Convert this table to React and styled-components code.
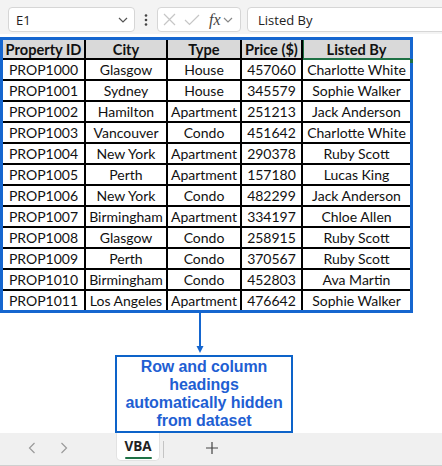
import styled, { createGlobalStyle } from "styled-components";

const GlobalStyle = createGlobalStyle`
  html, body {
    margin: 0;
    padding: 0;
    background: #ffffff;
    overflow: hidden;
  }
`;

const rows = [
  ["PROP1000", "Glasgow", "House", "457060", "Charlotte White"],
  ["PROP1001", "Sydney", "House", "345579", "Sophie Walker"],
  ["PROP1002", "Hamilton", "Apartment", "251213", "Jack Anderson"],
  ["PROP1003", "Vancouver", "Condo", "451642", "Charlotte White"],
  ["PROP1004", "New York", "Apartment", "290378", "Ruby Scott"],
  ["PROP1005", "Perth", "Apartment", "157180", "Lucas King"],
  ["PROP1006", "New York", "Condo", "482299", "Jack Anderson"],
  ["PROP1007", "Birmingham", "Apartment", "334197", "Chloe Allen"],
  ["PROP1008", "Glasgow", "Condo", "258915", "Ruby Scott"],
  ["PROP1009", "Perth", "Condo", "370567", "Ruby Scott"],
  ["PROP1010", "Birmingham", "Condo", "452803", "Ava Martin"],
  ["PROP1011", "Los Angeles", "Apartment", "476642", "Sophie Walker"],
];

const headers = ["Property ID", "City", "Type", "Price ($)", "Listed By"];

const Page = styled.div`
  width: 442px;
  height: 466px;
  display: flex;
  flex-direction: column;
  background: #fff;
  font-family: "Open Sans", "Noto Sans", sans-serif;
`;

const TopBar = styled.div`
  height: 34px;
  box-sizing: border-box;
  padding: 7px 0 0 8px;
  background: #f3f3f3;
  display: flex;
  align-items: flex-start;
  overflow: hidden;
`;

const Box = styled.div`
  height: 25px;
  box-sizing: border-box;
  background: #fff;
  border: 1px solid #d6d6d6;
  border-radius: 4px;
  display: flex;
  align-items: center;
`;

const NameBox = styled(Box)`
  width: 127px;
  padding: 0 6px 0 7px;
  justify-content: space-between;
  font-size: 13px;
  color: #222;
`;

const Dots = styled.div`
  width: 22px;
  height: 25px;
  display: flex;
  align-items: center;
  justify-content: center;
`;

const FxGroup = styled(Box)`
  width: 84px;
  padding: 0 4px 0 5px;
  gap: 8px;
`;

const FxLabel = styled.span`
  font-family: "Liberation Serif", serif;
  font-style: italic;
  font-size: 16px;
  color: #444;
  margin-left: 1px;
  margin-right: -6px;
`;

const FormulaBox = styled(Box)`
  flex: 1;
  margin-left: 6px;
  margin-right: -10px;
  padding-left: 10px;
  font-size: 13px;
  color: #222;
`;

const Sheet = styled.div`
  padding-top: 3px;
  display: flex;
  flex-direction: column;
`;

const TableFrame = styled.div`
  width: fit-content;
  border: 3px solid #1566cf;
`;

const Grid = styled.div`
  display: grid;
  grid-template-columns: 81px 80px 72px 59px 107px;
  grid-template-rows: 18px;
  grid-auto-rows: 19px;
  gap: 2px;
  background: #000;
`;

const Cell = styled.div`
  background: ${(p) => (p.$head ? "#d9d9d9" : "#fff")};
  display: flex;
  align-items: center;
  justify-content: center;
  font-family: "Lato", sans-serif;
  font-size: ${(p) => (p.$head ? "14.6px" : "14px")};
  font-weight: ${(p) => (p.$head ? 700 : 400)};
  color: #111;
  white-space: nowrap;
  position: relative;
  ${(p) =>
    p.$active &&
    `
    box-shadow: inset 1px 0 0 #1e7145;
    &::before {
      content: "";
      position: absolute;
      left: 0;
      right: 0;
      bottom: -2px;
      height: 2px;
      background: #1e7145;
    }
    &::after {
      content: "";
      position: absolute;
      right: -3px;
      bottom: -5px;
      width: 4px;
      height: 4px;
      background: #1e7145;
    }
  `}
`;

const Arrow = styled.svg`
  display: block;
  margin-left: 194px;
`;

const Callout = styled.div`
  width: 178px;
  height: 78px;
  box-sizing: border-box;
  margin-left: 115px;
  border: 2px solid #0d63c9;
  display: flex;
  flex-direction: column;
  align-items: center;
  justify-content: center;
  font-family: "Liberation Sans", Arial, sans-serif;
  font-weight: 700;
  font-size: 16px;
  letter-spacing: -0.1px;
  line-height: 18px;
  color: #1f5fd3;
  text-align: center;
  white-space: nowrap;
`;

const TabBar = styled.div`
  margin-top: auto;
  height: 33px;
  box-sizing: border-box;
  background: #f0f0f0;
  border-bottom: 1px solid #cfcfcf;
  display: flex;
  align-items: flex-start;
`;

const Nav = styled.div`
  width: 32px;
  height: 30px;
  display: flex;
  align-items: center;
  justify-content: center;
  margin-left: ${(p) => p.$offset || 0}px;
`;

const Tab = styled.div`
  margin-left: 36px;
  width: 44px;
  height: 28px;
  box-sizing: border-box;
  background: #fff;
  border: 1px solid #e2e2e2;
  border-top: none;
  border-radius: 0 0 5px 5px;
  display: flex;
  flex-direction: column;
  align-items: center;
  padding-top: 5px;
  font-family: "Open Sans", sans-serif;
  font-weight: 700;
  font-size: 13.5px;
  line-height: 16px;
  color: #222;
`;

const TabLine = styled.div`
  width: 27px;
  height: 2px;
  border-radius: 1px;
  background: #1e7145;
  margin-top: 3px;
`;

const Separator = styled.div`
  width: 1px;
  height: 17px;
  margin: 8px 0 0 3px;
  background: #c4c4c4;
`;

const AddButton = styled.div`
  width: 14px;
  height: 30px;
  margin-left: 41px;
  display: flex;
  align-items: center;
  justify-content: center;
`;

const Chevron = ({ color = "#555" }) => (
  <svg width="10" height="6" viewBox="0 0 10 6">
    <path d="M1 1 L5 5 L9 1" fill="none" stroke={color} strokeWidth="1.2" />
  </svg>
);

export default function App() {
  return (
    <Page>
      <GlobalStyle />
      <TopBar>
        <NameBox>
          <span>E1</span>
          <Chevron />
        </NameBox>
        <Dots>
          <svg width="4" height="12" viewBox="0 0 4 12">
            <circle cx="2" cy="1.5" r="1.3" fill="#444" />
            <circle cx="2" cy="6" r="1.3" fill="#444" />
            <circle cx="2" cy="10.5" r="1.3" fill="#444" />
          </svg>
        </Dots>
        <FxGroup>
          <svg width="13" height="13" viewBox="0 0 13 13">
            <path d="M1 1 L12 12 M12 1 L1 12" stroke="#c6c6c6" strokeWidth="1.2" />
          </svg>
          <svg width="16" height="12" viewBox="0 0 16 12">
            <path d="M1 6 L5.5 10.5 L15 1" fill="none" stroke="#c6c6c6" strokeWidth="1.2" />
          </svg>
          <FxLabel>fx</FxLabel>
          <Chevron color="#888" />
        </FxGroup>
        <FormulaBox>Listed By</FormulaBox>
      </TopBar>

      <Sheet>
        <TableFrame>
          <Grid>
            {headers.map((h, i) => (
              <Cell key={h} $head $active={i === 4}>
                {h}
              </Cell>
            ))}
            {rows.map((r) =>
              r.map((v, i) => <Cell key={r[0] + i}>{v}</Cell>)
            )}
          </Grid>
        </TableFrame>
        <Arrow width="12" height="42" viewBox="0 0 12 42">
          <path d="M6 0 V34" stroke="#1566cf" strokeWidth="2" />
          <path d="M2.5 33 L6 40 L9.5 33 Z" fill="#1566cf" />
        </Arrow>
        <Callout>
          <div>Row and column</div>
          <div>headings</div>
          <div>automatically hidden</div>
          <div>from dataset</div>
        </Callout>
      </Sheet>

      <TabBar>
        <Nav $offset={16}>
          <svg width="8" height="12" viewBox="0 0 8 12">
            <path d="M6.5 1 L1.5 6 L6.5 11" fill="none" stroke="#9a9a9a" strokeWidth="1.2" />
          </svg>
        </Nav>
        <Nav>
          <svg width="8" height="12" viewBox="0 0 8 12">
            <path d="M1.5 1 L6.5 6 L1.5 11" fill="none" stroke="#9a9a9a" strokeWidth="1.2" />
          </svg>
        </Nav>
        <Tab>
          VBA
          <TabLine />
        </Tab>
        <Separator />
        <AddButton>
          <svg width="12" height="12" viewBox="0 0 12 12">
            <path d="M6 0 V12 M0 6 H12" stroke="#444" strokeWidth="1.2" />
          </svg>
        </AddButton>
      </TabBar>
    </Page>
  );
}
